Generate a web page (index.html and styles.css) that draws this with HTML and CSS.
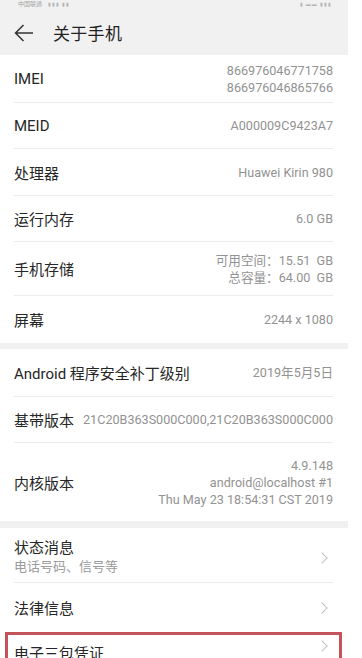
FILE: index.html
```html
<!DOCTYPE html>
<html lang="zh-CN">
<head>
<meta charset="utf-8">
<title>关于手机</title>
<link rel="stylesheet" href="styles.css">
</head>
<body>
<div class="page">
  <div class="topbar">
    <div class="status"><span class="carrier">中国联通</span><span class="sig">▮▮▮ ▮▮</span><span class="spacer"></span><span class="sig">▮ ▬▬ ▮▮▮</span></div>
    <div class="header">
      <svg class="back" width="20" height="18" viewBox="0 0 20 18"><path d="M19 9H1.5M9.5 1L1.5 9l8 8" fill="none" stroke="#333" stroke-width="1.5"/></svg>
      <span class="title">关于手机</span>
    </div>
  </div>

  <div class="section">
    <div class="row h48"><span class="label">IMEI</span><span class="value">866976046771758<br>866976046865766</span></div>
    <div class="row h46"><span class="label">MEID</span><span class="value">A000009C9423A7</span></div>
    <div class="row h47"><span class="label">处理器</span><span class="value">Huawei Kirin 980</span></div>
    <div class="row h46"><span class="label">运行内存</span><span class="value">6.0 GB</span></div>
    <div class="row h54"><span class="label">手机存储</span><span class="value">可用空间：15.51&nbsp; GB<br>总容量：64.00&nbsp; GB</span></div>
    <div class="row h47 last"><span class="label">屏幕</span><span class="value">2244 x 1080</span></div>
  </div>
  <div class="gap g6"></div>
  <div class="section">
    <div class="row h48"><span class="label">Android 程序安全补丁级别</span><span class="value">2019年5月5日</span></div>
    <div class="row h46"><span class="label">基带版本</span><span class="value">21C20B363S000C000,21C20B363S000C000</span></div>
    <div class="row h78 last"><span class="label">内核版本</span><span class="value">4.9.148<br>android@localhost #1<br>Thu May 23 18:54:31 CST 2019</span></div>
  </div>
  <div class="gap g7"></div>
  <div class="section">
    <div class="row h55 pad"><span class="stack"><span class="label">状态消息</span><span class="sub">电话号码、信号等</span></span><span class="chev"></span></div>
    <div class="row h49 last"><span class="label">法律信息</span><span class="chev"></span></div>
    <div class="mark">
      <div class="row h40 last inner"><span class="label">电子三包凭证</span><span class="chev"></span></div>
    </div>
  </div>
</div>
</body>
</html>
```
FILE: styles.css
```css
html, body {
  margin: 0;
  padding: 0;
  background: #fff;
}
body {
  font-family: Roboto, "Noto Sans CJK SC", sans-serif;
  color: #222;
}
.page {
  width: 348px;
  background: #fff;
}
.topbar {
  background: #f1f1f1;
  height: 55px;
  display: flex;
  flex-direction: column;
}
.status {
  height: 7px;
  display: flex;
  align-items: flex-end;
  padding: 0 16px 0 18px;
  font-size: 6px;
  line-height: 6px;
  color: #a5a5a5;
  gap: 6px;
}
.status .spacer { flex: 1; }
.status .sig { font-size: 5px; color: #b5b5b5; letter-spacing: 1px; }
.header {
  flex: 1;
  display: flex;
  align-items: center;
  padding: 3px 0 0 14px;
}
.back { display: block; margin-right: 19px; }
.title {
  font-size: 17px;
  color: #222;
  letter-spacing: 0.3px;
}
.section { background: #fff; }
.gap { background: #f1f1f1; }
.g6 { height: 6px; }
.g7 { height: 7px; }
.row {
  margin: 0 15px 0 14px;
  display: flex;
  align-items: center;
  justify-content: space-between;
  border-bottom: 1px solid #ececec;
  box-sizing: border-box;
}
.row.last { border-bottom: none; }
.row.pad { padding-top: 5px; }
.h40 { height: 40px; }
.h46 { height: 46px; }
.h47 { height: 47px; }
.h48 { height: 48px; }
.h49 { height: 49px; }
.h54 { height: 54px; }
.h55 { height: 55px; }
.h78 { height: 78px; }
.label {
  font-size: 15px;
  color: #262626;
  white-space: nowrap;
}
.value {
  font-size: 12.6px;
  color: #929292;
  text-align: right;
  line-height: 17px;
  white-space: nowrap;
}
.stack { display: flex; flex-direction: column; }
.stack .label { line-height: 19px; }
.sub { font-size: 13px; color: #9a9a9a; line-height: 18px; }
.chev {
  width: 7px;
  height: 7px;
  border-top: 1px solid #c2c2c2;
  border-right: 1px solid #c2c2c2;
  transform: rotate(45deg);
  margin-right: 7px;
}
.mark {
  margin: 0 6px 0 5px;
  border: 3px solid #c4535c;
  border-bottom: none;
}
.row.inner {
  margin: 0 6px 0 6px;
  align-items: flex-start;
  padding-top: 7px;
}
```
